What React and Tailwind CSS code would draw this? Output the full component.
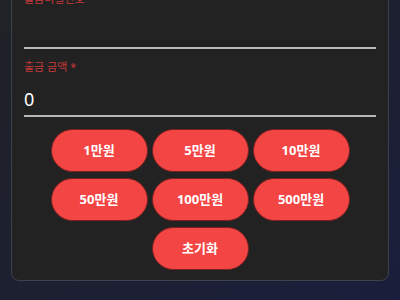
export default function App() {
  const amounts = ["1만원", "5만원", "10만원", "50만원", "100만원", "500만원"];
  const font = { fontFamily: '"Noto Sans", "Noto Sans CJK KR", sans-serif' };
  return (
    <div
      className="w-[400px] h-[300px] overflow-hidden bg-gradient-to-br from-[#1f2226] via-[#1d2030] to-[#1a1e3c]"
      style={font}
    >
      <div className="mx-[11px] mt-[-20px] rounded-lg border border-[#3d424f] bg-[#222222] px-3 pt-[10px] pb-[10px]">
        <div className="h-[16px] text-[11px] leading-[16px] text-[#c53a3a]">출금비밀번호</div>
        <div className="h-[42px] border-b-2 border-[#b8b8b8]"></div>
        <div className="mt-[10px] h-[16px] text-[11px] leading-[16px] text-[#c53a3a]">출금 금액 *</div>
        <div className="h-[42px] border-b-2 border-[#b8b8b8] pt-[12px] text-[18px] leading-[24px] text-white">0</div>
        <div className="mt-[12px] grid grid-cols-[97px_97px_97px] justify-center gap-x-[4px] gap-y-[6px]">
          {amounts.map((a) => (
            <button
              key={a}
              className="h-[43px] rounded-full border border-[#7d2020] bg-[#f44545] text-[13px] font-bold text-white"
            >
              {a}
            </button>
          ))}
          <button className="col-start-2 h-[43px] rounded-full border border-[#7d2020] bg-[#f44545] text-[13px] font-bold text-white">
            초기화
          </button>
        </div>
      </div>
    </div>
  );
}
